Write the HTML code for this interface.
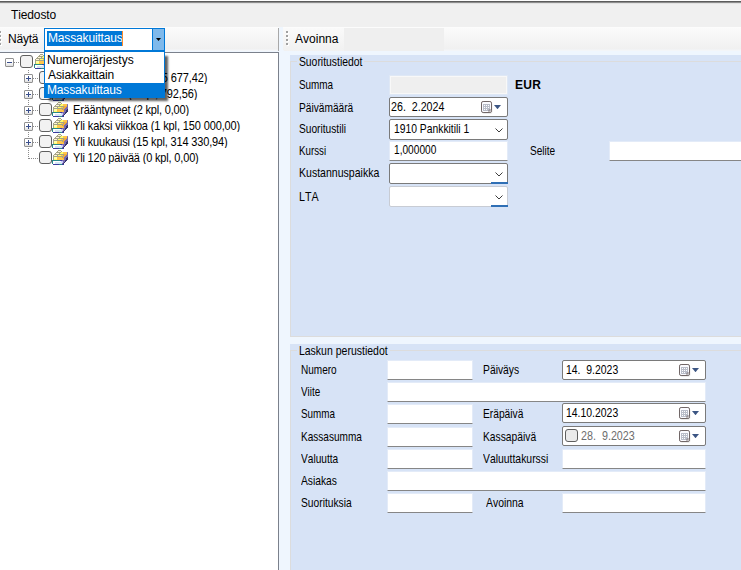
<!DOCTYPE html>
<html>
<head>
<meta charset="utf-8">
<title>Massakuittaus</title>
<style>
html,body{margin:0;padding:0;}
body{width:741px;height:570px;overflow:hidden;position:relative;background:#f0f0f0;font-family:"Liberation Sans",sans-serif;font-size:11px;color:#000;font-kerning:none;}
.abs{position:absolute;}
.t12{font-size:12px;line-height:14px;white-space:pre;}
.t11{font-size:11px;line-height:13px;white-space:pre;}
.lbl{position:absolute;font-size:11px;line-height:13px;white-space:pre;color:#000;transform:scaleY(1.1);transform-origin:0 10.3px;}
.tb{position:absolute;background:#fff;border:1px solid #e3ebf8;border-bottom:1px solid #868686;box-sizing:border-box;}
.dp{position:absolute;background:#fff;border:1px solid #7a7a7a;border-radius:2px;box-sizing:border-box;}
.cb{position:absolute;background:#fff;border:1px solid #7a7a7a;border-radius:2px;box-sizing:border-box;}
.cb2{position:absolute;background:#fff;border:1px solid #c8ccd4;border-radius:2px;box-sizing:border-box;}
.chk{position:absolute;width:13px;height:13px;box-sizing:border-box;border:1px solid #5f5f5f;border-radius:3px;background:#f2f2f2;}
.exp{position:absolute;width:9px;height:9px;box-sizing:border-box;border:1px solid #919191;background:linear-gradient(#fff 45%,#dedede);border-radius:1px;}
.exp i{position:absolute;left:1px;top:3px;width:5px;height:1px;background:#3a4f8c;}
.exp b{position:absolute;left:3px;top:1px;width:1px;height:5px;background:#3a4f8c;}
.hd{position:absolute;height:1px;background-image:linear-gradient(to right,#8c8c8c 50%,transparent 50%);background-size:2px 1px;}
.vd{position:absolute;width:1px;background-image:linear-gradient(to bottom,#8c8c8c 50%,transparent 50%);background-size:1px 2px;}
.ti{position:absolute;font-size:11px;line-height:13px;white-space:pre;transform:scaleY(1.1);transform-origin:0 2.4px;}
</style>
</head>
<body>
<!-- top window edge -->
<div class="abs" style="left:0;top:0;width:741px;height:1px;background:#fdfdfd;"></div>
<div class="abs" style="left:0;top:1px;width:741px;height:1px;background:#5c5c5c;"></div>
<div class="abs" style="left:0;top:2px;width:741px;height:1px;background:#8e8e8e;"></div><div class="abs" style="left:0;top:3px;width:741px;height:1px;background:#e2e2e2;"></div>

<!-- menu -->
<div class="abs t12" id="menu1" style="left:11px;top:8px;letter-spacing:-0.12px;">Tiedosto</div>

<!-- toolbar line -->
<div class="abs" style="left:0;top:27px;width:741px;height:25px;background:#eff6fe;"></div>
<div class="abs" style="left:0;top:27px;width:279px;height:1px;background:#fcfcfc;"></div><div class="abs" style="left:283px;top:27px;width:458px;height:1px;background:#fcfcfc;"></div>
<!-- left toolbar -->
<div class="abs" id="ltool" style="left:0;top:28px;width:279px;height:23px;box-sizing:border-box;border-right:1px solid #a8a8a8;background:linear-gradient(#fbfbfb 0,#f0f0f0 21px,#f4f6f9 22px);"></div>
<div class="abs" style="left:0;top:32px;width:2px;height:16px;background-image:linear-gradient(to bottom,#fff 50%,transparent 50%);background-size:2px 4px;"></div><div class="abs" style="left:0;top:31px;width:1px;height:16px;background-image:linear-gradient(to bottom,#a0a0a0 50%,transparent 50%);background-size:1px 4px;"></div>
<div class="abs t12" id="nayta" style="left:8px;top:32px;letter-spacing:-0.204px;">Näytä</div>

<!-- right toolbar -->
<div class="abs" id="rtool" style="left:283px;top:28px;width:458px;height:23px;background:linear-gradient(#fbfbfb 0,#f0f0f0 21px,#f3f5f8 22px);border-radius:0 0 0 3px;"></div>
<div class="abs" style="left:283px;top:28px;width:161px;height:23px;background:#efefef;border-radius:0 0 0 3px;"></div>
<div class="abs" style="left:283px;top:28px;width:61px;height:23px;background:linear-gradient(#fafafa,#f1f1f1);border-radius:0 0 0 3px;"></div>
<div class="abs" style="left:287px;top:32px;width:2px;height:16px;background-image:linear-gradient(to bottom,#fff 50%,transparent 50%);background-size:2px 4px;"></div><div class="abs" style="left:286px;top:31px;width:2px;height:16px;background-image:linear-gradient(to bottom,#a0a0a0 50%,transparent 50%);background-size:2px 4px;"></div>
<div class="abs t12" id="avo" style="left:295px;top:32px;letter-spacing:0.015px;">Avoinna</div>

<!-- tree panel -->
<div class="abs" id="tree" style="left:0;top:52px;width:279px;height:520px;background:#fff;border-top:1px solid #7b818c;border-right:1px solid #7b818c;box-sizing:border-box;"></div>

<!-- tree lines -->
<div class="hd" style="left:14px;top:62px;width:6px;"></div>
<div class="vd" style="left:28px;top:70px;height:89px;"></div>
<div class="hd" style="left:33px;top:78px;width:6px;"></div>
<div class="hd" style="left:33px;top:94px;width:6px;"></div>
<div class="hd" style="left:33px;top:110px;width:6px;"></div>
<div class="hd" style="left:33px;top:126px;width:6px;"></div>
<div class="hd" style="left:33px;top:142px;width:6px;"></div>
<div class="hd" style="left:29px;top:158px;width:10px;"></div>

<!-- expanders -->
<div class="exp" style="left:5px;top:58px;"><i></i></div>
<div class="exp" style="left:24px;top:74px;"><i></i><b></b></div>
<div class="exp" style="left:24px;top:90px;"><i></i><b></b></div>
<div class="exp" style="left:24px;top:106px;"><i></i><b></b></div>
<div class="exp" style="left:24px;top:122px;"><i></i><b></b></div>
<div class="exp" style="left:24px;top:138px;"><i></i><b></b></div>

<!-- checkboxes -->
<div class="chk" style="left:20px;top:55px;"></div>
<div class="chk" style="left:39px;top:71px;"></div>
<div class="chk" style="left:39px;top:87px;"></div>
<div class="chk" style="left:39px;top:103px;"></div>
<div class="chk" style="left:39px;top:119px;"></div>
<div class="chk" style="left:39px;top:135px;"></div>
<div class="chk" style="left:39px;top:151px;"></div>

<!-- icons -->
<svg width="0" height="0" style="position:absolute">
<defs>
<linearGradient id="gy" x1="0" y1="0" x2="1" y2="0"><stop offset="0" stop-color="#fff27a"/><stop offset="0.45" stop-color="#ffd860"/><stop offset="1" stop-color="#f7b33a"/></linearGradient><linearGradient id="go" x1="0" y1="0" x2="0" y2="1"><stop offset="0" stop-color="#f7b232"/><stop offset="0.55" stop-color="#e0a040"/><stop offset="1" stop-color="#6a62a0"/></linearGradient>
<linearGradient id="gb" x1="0" y1="0" x2="1" y2="0"><stop offset="0" stop-color="#ffffff"/><stop offset="0.5" stop-color="#eef0fa"/><stop offset="1" stop-color="#a9b6ea"/></linearGradient>
<g id="ico" shape-rendering="crispEdges">
<rect x="6" y="0" width="3" height="1" fill="#a4a486"/>
<rect x="5" y="1" width="1" height="1" fill="#a4a486"/>
<rect x="6" y="1" width="3" height="1" fill="#fff3da"/>
<rect x="9" y="1" width="1" height="1" fill="#a4a486"/>
<rect x="4" y="2" width="5" height="1" fill="#a4a486"/>
<rect x="9" y="2" width="2" height="1" fill="#ffff6a"/>
<rect x="11" y="2" width="4" height="1" fill="#ffc64a"/>
<rect x="15" y="2" width="1" height="1" fill="#8a7cb0"/>
<rect x="3" y="3" width="1" height="1" fill="#a4a486"/>
<rect x="4" y="3" width="3" height="1" fill="#fff3da"/>
<rect x="7" y="3" width="1" height="1" fill="#a4a486"/>
<rect x="8" y="3" width="3" height="1" fill="#ffff6a"/>
<rect x="11" y="3" width="4" height="1" fill="#ffc64a"/>
<rect x="15" y="3" width="1" height="1" fill="#7a6cae"/>
<rect x="2" y="4" width="10" height="1" fill="#a4a486"/>
<rect x="12" y="4" width="3" height="1" fill="#f2ac36"/>
<rect x="15" y="4" width="1" height="1" fill="#7a6cae"/>
<rect x="1" y="5" width="1" height="1" fill="#a4a486"/>
<rect x="2" y="5" width="3" height="1" fill="#fff3da"/>
<rect x="5" y="5" width="1" height="1" fill="#a4a486"/>
<rect x="6" y="5" width="3" height="1" fill="#ffff6a"/>
<rect x="9" y="5" width="2" height="1" fill="#ffc64a"/>
<rect x="11" y="5" width="1" height="1" fill="#a4a486"/>
<rect x="12" y="5" width="2" height="1" fill="#f2ac36"/>
<rect x="14" y="5" width="2" height="1" fill="#7a6cae"/>
<rect x="1" y="6" width="10" height="1" fill="#a4a486"/>
<rect x="11" y="6" width="2" height="1" fill="#f2ac36"/>
<rect x="13" y="6" width="3" height="1" fill="#7a6cae"/>
<rect x="1" y="7" width="1" height="1" fill="#a4a486"/>
<rect x="2" y="7" width="3" height="1" fill="#ffffa6"/>
<rect x="5" y="7" width="5" height="1" fill="#ffc64a"/>
<rect x="10" y="7" width="1" height="1" fill="#a4a486"/>
<rect x="11" y="7" width="1" height="1" fill="#f2ac36"/>
<rect x="12" y="7" width="3" height="1" fill="#7a6cae"/>
<rect x="15" y="7" width="1" height="1" fill="#34346e"/>
<rect x="1" y="8" width="1" height="1" fill="#a4a486"/>
<rect x="2" y="8" width="3" height="1" fill="#ffffa6"/>
<rect x="5" y="8" width="6" height="1" fill="#ffc64a"/>
<rect x="11" y="8" width="1" height="1" fill="#f2ac36"/>
<rect x="12" y="8" width="2" height="1" fill="#7a6cae"/>
<rect x="14" y="8" width="2" height="1" fill="#34346e"/>
<rect x="1" y="9" width="1" height="1" fill="#a4a486"/>
<rect x="2" y="9" width="3" height="1" fill="#ffff6a"/>
<rect x="5" y="9" width="7" height="1" fill="#ffc64a"/>
<rect x="12" y="9" width="2" height="1" fill="#7a6cae"/>
<rect x="14" y="9" width="2" height="1" fill="#34346e"/>
<rect x="0" y="10" width="8" height="1" fill="#2a8888"/>
<rect x="8" y="10" width="2" height="1" fill="#3c3ca0"/>
<rect x="10" y="10" width="3" height="1" fill="#7a6cae"/>
<rect x="13" y="10" width="2" height="1" fill="#34346e"/>
<rect x="0" y="11" width="1" height="1" fill="#2a8888"/>
<rect x="1" y="11" width="8" height="1" fill="#ffffff"/>
<rect x="9" y="11" width="2" height="1" fill="#c6c8fa"/>
<rect x="11" y="11" width="2" height="1" fill="#7a6cae"/>
<rect x="13" y="11" width="1" height="1" fill="#34346e"/>
<rect x="0" y="12" width="1" height="1" fill="#2a8888"/>
<rect x="1" y="12" width="2" height="1" fill="#ffffff"/>
<rect x="3" y="12" width="7" height="1" fill="#d4e6f4"/>
<rect x="10" y="12" width="1" height="1" fill="#c6c8fa"/>
<rect x="11" y="12" width="1" height="1" fill="#7a6cae"/>
<rect x="12" y="12" width="1" height="1" fill="#34346e"/>
<rect x="0" y="13" width="1" height="1" fill="#2a8888"/>
<rect x="1" y="13" width="2" height="1" fill="#ffffff"/>
<rect x="3" y="13" width="7" height="1" fill="#d4e6f4"/>
<rect x="10" y="13" width="1" height="1" fill="#7a6cae"/>
<rect x="11" y="13" width="1" height="1" fill="#34346e"/>
<rect x="1" y="14" width="6" height="1" fill="#3c3ca0"/>
<rect x="7" y="14" width="3" height="1" fill="#2a8888"/>
<rect x="10" y="14" width="2" height="1" fill="#3c3ca0"/>
</g>
</defs>
</svg>
<svg class="abs" style="left:34px;top:54px;" width="16" height="16" viewBox="0 0 16 16"><use href="#ico"/></svg>
<svg class="abs" style="left:52px;top:70px;" width="16" height="16" viewBox="0 0 16 16"><use href="#ico"/></svg>
<svg class="abs" style="left:52px;top:86px;" width="16" height="16" viewBox="0 0 16 16"><use href="#ico"/></svg>
<svg class="abs" style="left:52px;top:102px;" width="16" height="16" viewBox="0 0 16 16"><use href="#ico"/></svg>
<svg class="abs" style="left:52px;top:118px;" width="16" height="16" viewBox="0 0 16 16"><use href="#ico"/></svg>
<svg class="abs" style="left:52px;top:134px;" width="16" height="16" viewBox="0 0 16 16"><use href="#ico"/></svg>
<svg class="abs" style="left:52px;top:150px;" width="16" height="16" viewBox="0 0 16 16"><use href="#ico"/></svg>

<!-- tree texts -->
<div class="ti" id="tr2" style="right:533.6px;top:71px;letter-spacing:-0.1px;">Avoimet (12 kpl, 5 677,42)</div>
<div class="ti" id="tr3" style="right:543.6px;top:87px;letter-spacing:-0.1px;">Tulevat (3 kpl, 792,56)</div>
<div class="ti" id="tr4" style="left:73px;top:103px;letter-spacing:-0.182px;">Erääntyneet (2 kpl, 0,00)</div>
<div class="ti" id="tr5" style="left:73px;top:119px;letter-spacing:-0.127px;">Yli kaksi viikkoa (1 kpl, 150 000,00)</div>
<div class="ti" id="tr6" style="left:73px;top:135px;letter-spacing:-0.154px;">Yli kuukausi (15 kpl, 314 330,94)</div>
<div class="ti" id="tr7" style="left:73px;top:151px;letter-spacing:-0.166px;">Yli 120 päivää (0 kpl, 0,00)</div>

<!-- combo box in toolbar -->
<div class="abs" id="combo" style="left:44px;top:28px;width:121px;height:23px;box-sizing:border-box;border:1px solid #0078d7;background:#fff;"></div>
<div class="abs" style="left:152px;top:29px;width:12px;height:21px;background:#7fb9eb;border-left:1px solid #0078d7;box-sizing:border-box;"></div>
<svg class="abs" style="left:156px;top:38px;" width="5" height="3" viewBox="0 0 5 3"><path d="M0 0 L5 0 L2.5 3 Z" fill="#000"/></svg>
<div class="abs t12" id="csel" style="left:47px;top:31px;height:15px;line-height:15px;background:#0078d7;color:#fff;padding:0 0 0 1px;letter-spacing:-0.160px;width:74px;">Massakuittaus</div>
<div class="abs" style="left:122px;top:31px;width:1px;height:15px;background:#ff8a28;"></div>

<!-- dropdown list -->
<div class="abs" id="ddl" style="left:44px;top:51px;width:121px;height:47px;box-sizing:border-box;border:1px solid #0078d7;background:#fff;box-shadow:4px 4px 2px -1px rgba(0,0,0,0.62);"></div>
<div class="abs t12" id="dd1" style="left:47px;top:53px;height:15px;line-height:15px;letter-spacing:0px;">Numerojärjestys</div>
<div class="abs t12" id="dd2" style="left:48px;top:68px;height:15px;line-height:15px;letter-spacing:-0.090px;">Asiakkaittain</div>
<div class="abs" style="left:45px;top:83px;width:119px;height:14px;background:#0078d7;"></div>
<div class="abs t12" id="dd3" style="left:47px;top:83px;height:15px;line-height:15px;color:#fff;letter-spacing:-0.160px;">Massakuittaus</div>

<!-- right container -->
<div class="abs" id="rpane" style="left:279px;top:52px;width:462px;height:518px;background:#eff6fe;"></div>

<!-- group 1 -->
<div class="abs" id="g1" style="left:290px;top:55px;width:460px;height:282px;background:#d7e3f6;"></div>
<div class="abs" style="left:290px;top:61px;width:460px;height:276px;box-sizing:border-box;border:1px solid #dcdcdc;border-right:none;"></div>
<div class="lbl" id="g1t" style="left:297px;top:56px;background:#d7e3f6;padding:0 2px;letter-spacing:0px;transform:scale(0.9446,1.1);">Suoritustiedot</div>

<div class="lbl" id="l1" style="left:298.7px;top:79px;letter-spacing:0px;transform:scale(0.9007,1.1);">Summa</div>
<div class="lbl" id="l2" style="left:298.7px;top:102px;letter-spacing:0px;transform:scale(0.9239,1.1);">Päivämäärä</div>
<div class="lbl" id="l3" style="left:298.7px;top:123px;letter-spacing:0px;transform:scale(0.9245,1.1);">Suoritustili</div>
<div class="lbl" id="l4" style="left:298.7px;top:145px;letter-spacing:0px;transform:scale(0.8861,1.1);">Kurssi</div>
<div class="lbl" id="l5" style="left:298.7px;top:167px;letter-spacing:0px;transform:scale(0.9594,1.1);">Kustannuspaikka</div>
<div class="lbl" id="l6" style="left:299.4px;top:191px;letter-spacing:0px;transform:scale(0.9738,1.1);">LTA</div>
<div class="lbl" id="l7" style="left:530px;top:145px;letter-spacing:0px;transform:scale(0.9141,1.1);">Selite</div>

<div class="abs" id="f1" style="left:389px;top:75px;width:119px;height:20px;box-sizing:border-box;border:1px solid #dfe8f5;background:#efefef;box-shadow:inset 0 0 0 1px #f8f8f8;"></div>
<div class="abs" id="eur" style="left:515px;top:78px;font-size:12px;line-height:14px;font-weight:bold;letter-spacing:0.270px;">EUR</div>

<div class="dp" id="f2" style="left:389px;top:97px;width:119px;height:20px;"></div>
<div class="lbl" id="v1" style="left:391px;top:101px;letter-spacing:0px;transform:scale(0.9707,1.1);">26.  2.2024</div>
<div class="cb" id="f3" style="left:389px;top:119px;width:119px;height:21px;"></div>
<div class="lbl" id="v2" style="left:394px;top:123px;letter-spacing:0px;transform:scale(0.9393,1.1);">1910 Pankkitili 1</div>
<div class="tb" id="f4" style="left:389px;top:141px;width:119px;height:20px;"></div>
<div class="lbl" id="v3" style="left:394px;top:144px;letter-spacing:0px;transform:scale(0.9219,1.1);">1,000000</div>
<div class="cb" id="f5" style="left:389px;top:163px;width:119px;height:21px;"></div>
<div class="cb2" id="f6" style="left:389px;top:186px;width:119px;height:21px;"></div>
<div class="tb" id="f7" style="left:609px;top:141px;width:140px;height:20px;"></div>

<!-- group 2 -->
<div class="abs" id="g2" style="left:290px;top:344px;width:460px;height:230px;background:#d7e3f6;"></div>
<div class="abs" style="left:290px;top:350px;width:460px;height:230px;box-sizing:border-box;border:1px solid #dcdcdc;border-right:none;"></div>
<div class="lbl" id="g2t" style="left:297px;top:345px;background:#d7e3f6;padding:0 2px;letter-spacing:0px;transform:scale(0.9554,1.1);">Laskun perustiedot</div>

<div class="lbl" id="m1" style="left:300.6px;top:364px;letter-spacing:0px;transform:scale(0.9124,1.1);">Numero</div>
<div class="lbl" id="m2" style="left:300.6px;top:386px;letter-spacing:0px;transform:scale(0.8971,1.1);">Viite</div>
<div class="lbl" id="m3" style="left:300.6px;top:408px;letter-spacing:0px;transform:scale(0.8957,1.1);">Summa</div>
<div class="lbl" id="m4" style="left:300.6px;top:431px;letter-spacing:0px;transform:scale(0.9139,1.1);">Kassasumma</div>
<div class="lbl" id="m5" style="left:300.6px;top:453px;letter-spacing:0px;transform:scale(0.9212,1.1);">Valuutta</div>
<div class="lbl" id="m6" style="left:300.6px;top:475px;letter-spacing:0px;transform:scale(0.9338,1.1);">Asiakas</div>
<div class="lbl" id="m7" style="left:300.6px;top:497px;letter-spacing:0px;transform:scale(0.9314,1.1);">Suorituksia</div>
<div class="lbl" id="n1" style="left:482.8px;top:364px;letter-spacing:0px;transform:scale(0.9387,1.1);">Päiväys</div>
<div class="lbl" id="n3" style="left:482.8px;top:408px;letter-spacing:0px;transform:scale(0.9304,1.1);">Eräpäivä</div>
<div class="lbl" id="n4" style="left:482.8px;top:431px;letter-spacing:0px;transform:scale(0.9338,1.1);">Kassapäivä</div>
<div class="lbl" id="n5" style="left:482.8px;top:453px;letter-spacing:0px;transform:scale(0.9453,1.1);">Valuuttakurssi</div>
<div class="lbl" id="n7" style="left:486px;top:497px;letter-spacing:0px;transform:scale(0.9460,1.1);">Avoinna</div>

<div class="tb" style="left:387px;top:360px;width:86px;height:20px;"></div>
<div class="tb" style="left:387px;top:382px;width:319px;height:20px;"></div>
<div class="tb" style="left:387px;top:404px;width:86px;height:20px;"></div>
<div class="tb" style="left:387px;top:427px;width:86px;height:20px;"></div>
<div class="tb" style="left:387px;top:449px;width:86px;height:20px;"></div>
<div class="tb" style="left:387px;top:471px;width:319px;height:20px;"></div>
<div class="tb" style="left:387px;top:493px;width:86px;height:20px;"></div>
<div class="dp" style="left:562px;top:360px;width:144px;height:20px;"></div>
<div class="lbl" id="v4" style="left:566px;top:364px;letter-spacing:0px;transform:scale(0.9478,1.1);">14.  9.2023</div>
<div class="dp" style="left:562px;top:403px;width:144px;height:20px;"></div>
<div class="lbl" id="v5" style="left:566px;top:407px;letter-spacing:0px;transform:scale(0.9478,1.1);">14.10.2023</div>
<div class="dp" style="left:562px;top:426px;width:144px;height:20px;"></div>
<div class="chk" style="left:565px;top:429px;background:#ebebeb;"></div>
<div class="lbl" id="v6" style="left:581px;top:430px;color:#6d6d6d;letter-spacing:0px;transform:scale(0.9772,1.1);">28.  9.2023</div>
<div class="tb" style="left:562px;top:449px;width:144px;height:20px;"></div>
<div class="tb" style="left:562px;top:493px;width:144px;height:20px;"></div>

<!-- calendar icons + arrows -->
<svg width="0" height="0" style="position:absolute"><defs>
<g id="cal">
<rect x="1.2" y="1.8" width="10.2" height="11" rx="1.8" fill="#c8c8c8" opacity="0.45"/>
<rect x="0.5" y="0.5" width="10" height="11" rx="1.6" fill="#fbfbff" stroke="#706666"/>
<rect x="2" y="3" width="7" height="7" fill="#b9bdc9"/>
<path d="M3 4.5h1M5 4.5h1M7 4.5h1M3 6.5h1M5 6.5h1M7 6.5h1M3 8.5h1M5 8.5h1" stroke="#fff" stroke-width="1" shape-rendering="crispEdges"/>
<path d="M8 11 V9 H10.5" fill="#f4f4fa" stroke="#706666" stroke-width="0.8"/>
</g>
<g id="arr"><path d="M0 0 L7 0 L3.5 4.2 Z" fill="#3b5583"/></g>
<g id="chev"><path d="M0.5 0.5 L4 4 L7.5 0.5" fill="none" stroke="#3c3c3c" stroke-width="1"/></g>
</defs></svg>
<svg class="abs" style="left:481px;top:101px;" width="13" height="14"><use href="#cal"/></svg>
<svg class="abs" style="left:494px;top:105px;" width="7" height="4"><use href="#arr"/></svg>
<svg class="abs" style="left:679px;top:364px;" width="13" height="14"><use href="#cal"/></svg>
<svg class="abs" style="left:692px;top:368px;" width="7" height="4"><use href="#arr"/></svg>
<svg class="abs" style="left:679px;top:407px;" width="13" height="14"><use href="#cal"/></svg>
<svg class="abs" style="left:692px;top:411px;" width="7" height="4"><use href="#arr"/></svg>
<svg class="abs" style="left:679px;top:430px;" width="13" height="14"><use href="#cal"/></svg>
<svg class="abs" style="left:692px;top:434px;" width="7" height="4"><use href="#arr"/></svg>

<svg class="abs" style="left:495px;top:128px;" width="8" height="5"><use href="#chev"/></svg>
<svg class="abs" style="left:495px;top:172px;" width="8" height="5"><use href="#chev"/></svg>
<svg class="abs" style="left:495px;top:195px;" width="8" height="5"><use href="#chev"/></svg>
<div class="abs" style="left:491px;top:182px;width:17px;height:2px;background:#2f6fb5;"></div>
<div class="abs" style="left:491px;top:205px;width:17px;height:2px;background:#2f6fb5;"></div>

</body>
</html>
